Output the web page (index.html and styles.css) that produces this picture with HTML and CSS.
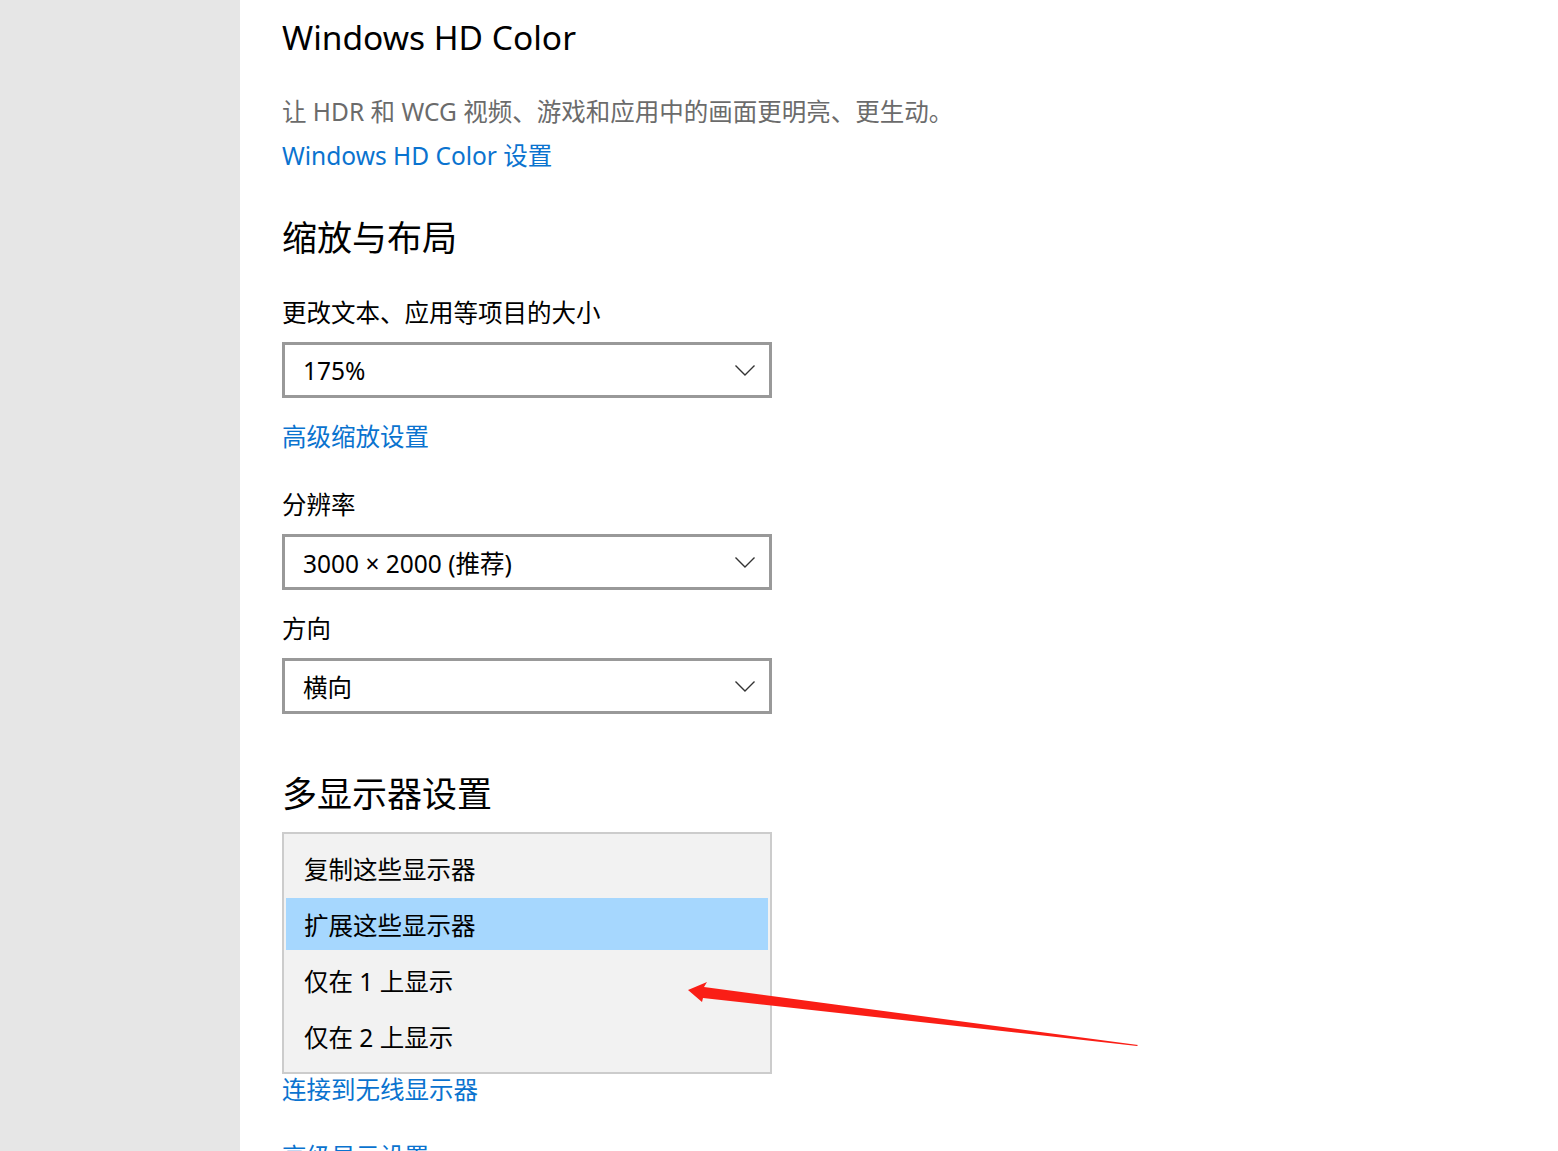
FILE: index.html
```html
<!DOCTYPE html>
<html lang="zh-CN">
<head>
  <meta charset="UTF-8" />
  <title>显示设置</title>
  <link rel="stylesheet" href="styles.css">
</head>
<body>
  <div class="page">
    <aside class="sidebar"></aside>

    <main class="content">
      <h2 class="title latin">Windows HD Color</h2>
      <p class="desc">让 HDR 和 WCG 视频、游戏和应用中的画面更明亮、更生动。</p>
      <a class="link" href="#">Windows HD Color 设置</a>

      <h2 class="title section">缩放与布局</h2>
      <div class="label">更改文本、应用等项目的大小</div>
      <div class="dropdown">
        <span>175%</span>
        <svg class="chevron" width="20" height="11" viewBox="0 0 20 11"><path d="M0.5 0.5 L10 10 L19.5 0.5" fill="none" stroke="#333" stroke-width="1.4"/></svg>
      </div>
      <a class="link after-box" href="#">高级缩放设置</a>

      <div class="label spaced">分辨率</div>
      <div class="dropdown">
        <span>3000 × 2000 (推荐)</span>
        <svg class="chevron" width="20" height="11" viewBox="0 0 20 11"><path d="M0.5 0.5 L10 10 L19.5 0.5" fill="none" stroke="#333" stroke-width="1.4"/></svg>
      </div>

      <div class="label after-box">方向</div>
      <div class="dropdown">
        <span>横向</span>
        <svg class="chevron" width="20" height="11" viewBox="0 0 20 11"><path d="M0.5 0.5 L10 10 L19.5 0.5" fill="none" stroke="#333" stroke-width="1.4"/></svg>
      </div>

      <h2 class="title multi">多显示器设置</h2>
      <ul class="listbox">
        <li>复制这些显示器</li>
        <li class="selected">扩展这些显示器</li>
        <li>仅在 1 上显示</li>
        <li>仅在 2 上显示</li>
      </ul>
      <a class="link tight" href="#">连接到无线显示器</a>
      <a class="link more" href="#">高级显示设置</a>

      <!-- red annotation arrow drawn over the screenshot -->
      <svg class="annotation" width="460" height="70" viewBox="0 0 460 70">
        <polygon points="0,10 19,2 16,7 450,65 449,66 15,18 14,22" fill="#fa1e16"/>
      </svg>
    </main>
  </div>
</body>
</html>
```

FILE: styles.css
```css
* {
  box-sizing: border-box;
  margin: 0;
  padding: 0;
}

html, body {
  height: 100%;
  overflow: hidden;
}

body {
  background: #ffffff;
  font-family: "Noto Sans", "Noto Sans CJK SC", sans-serif;
  font-size: 24.5px;
  color: #000000;
}

.page {
  display: flex;
  height: 100vh;
}

.sidebar {
  width: 240px;
  flex-shrink: 0;
  background: #e6e6e6;
}

.content {
  position: relative;
  flex: 1;
  padding: 13px 0 0 42px;
  display: flex;
  flex-direction: column;
  align-items: flex-start;
}

.content > * {
  flex-shrink: 0;
}

.title {
  font-size: 35px;
  font-weight: 400;
  line-height: 48px;
}

.title.latin {
  font-size: 33.5px;
}

.title.section {
  margin-top: 40px;
}

.title.multi {
  margin-top: 56px;
}

.desc {
  margin-top: 33px;
  line-height: 36px;
  color: #6b6b6b;
}

.link {
  margin-top: 8px;
  line-height: 36px;
  color: #0a73cf;
  text-decoration: none;
}

.label {
  margin-top: 33px;
  line-height: 36px;
}

.link.after-box,
.label.after-box {
  margin-top: 21px;
}

.label.spaced {
  margin-top: 32px;
}

.dropdown {
  margin-top: 11px;
  width: 490px;
  height: 56px;
  border: 3px solid #999999;
  background: #ffffff;
  display: flex;
  align-items: center;
  justify-content: space-between;
  padding: 0 14px 0 18px;
}

.chevron {
  display: block;
}

.listbox {
  list-style: none;
  margin-top: 14px;
  width: 490px;
  border: 2px solid #cccccc;
  background: #f2f2f2;
  padding: 6px 2px 8px;
}

.listbox li {
  height: 56px;
  display: flex;
  align-items: center;
  padding-left: 18px;
}

.listbox li.selected {
  background: #a6d7fe;
  margin: 2px 0;
  height: 52px;
}

.link.tight {
  margin-top: 0;
  line-height: 32px;
}

.link.more {
  margin-top: 33px;
}

.annotation {
  position: absolute;
  left: 448px;
  top: 980px;
}
```
